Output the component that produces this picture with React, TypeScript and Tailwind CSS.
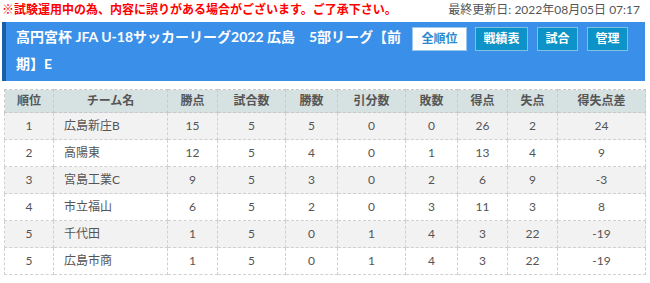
import React from "react";

const rows = [
  { rank: 1, team: "広島新庄B", pts: 15, games: 5, win: 5, draw: 0, lose: 0, gf: 26, ga: 2, diff: 24 },
  { rank: 2, team: "高陽東", pts: 12, games: 5, win: 4, draw: 0, lose: 1, gf: 13, ga: 4, diff: 9 },
  { rank: 3, team: "宮島工業C", pts: 9, games: 5, win: 3, draw: 0, lose: 2, gf: 6, ga: 9, diff: -3 },
  { rank: 4, team: "市立福山", pts: 6, games: 5, win: 2, draw: 0, lose: 3, gf: 11, ga: 3, diff: 8 },
  { rank: 5, team: "千代田", pts: 1, games: 5, win: 0, draw: 1, lose: 4, gf: 3, ga: 22, diff: -19 },
  { rank: 5, team: "広島市商", pts: 1, games: 5, win: 0, draw: 1, lose: 4, gf: 3, ga: 22, diff: -19 },
];

const headers = ["順位", "チーム名", "勝点", "試合数", "勝数", "引分数", "敗数", "得点", "失点", "得失点差"];
const widths = [49, 114, 50, 68, 52, 68, 52, 50, 50, 88];

export default function App() {
  return (
    <div
      className="w-[650px] h-[283px] bg-white overflow-hidden"
      style={{ fontFamily: 'Lato, "Noto Sans CJK JP", sans-serif' }}
    >
      <div className="flex items-center justify-between h-[20px] pl-[2px] pr-[10px] text-[12px]">
        <span className="font-bold text-[#ff0000]">※試験運用中の為、内容に誤りがある場合がございます。ご了承下さい。</span>
        <span className="text-[#555]">最終更新日: 2022年08月05日 07:17</span>
      </div>

      <div className="mt-[2px] ml-[2px] mr-[5px] flex bg-[#3a8fe8] border-l-[4px] border-[#1b5ea6] pl-[10px] pt-[1px] pb-[4px] h-[59px]">
        <div className="w-[394px] text-white font-bold text-[14px] leading-[27px]">
          高円宮杯 JFA U-18サッカーリーグ2022 広島　5部リーグ【前期】E
        </div>
        <div className="ml-auto mr-[17px] flex gap-[8px] pt-[4px] items-start text-[12px] font-bold">
          <button className="h-[24px] w-[55px] bg-white border border-[#9cc8ee] text-[#2a8bd0]">全順位</button>
          <button className="h-[24px] w-[53px] bg-[#0d93c7] border border-[#7fc1e6] text-white">戦績表</button>
          <button className="h-[24px] w-[41px] bg-[#0d93c7] border border-[#7fc1e6] text-white ml-[1px]">試合</button>
          <button className="h-[24px] w-[41px] bg-[#0d93c7] border border-[#7fc1e6] text-white ml-[1px]">管理</button>
        </div>
      </div>

      <div className="mt-[8px] ml-[4px]">
        <table className="border-collapse text-[12px] text-[#555] border border-dashed border-[#d0d0d0]">
          <colgroup>
            {widths.map((w, i) => (
              <col key={i} style={{ width: w }} />
            ))}
          </colgroup>
          <thead>
            <tr className="h-[23px] bg-[#d6e1e2]">
              {headers.map((h) => (
                <th key={h} className="font-bold text-[#555] border border-dashed border-[#c8c8c8] p-0 text-center">
                  {h}
                </th>
              ))}
            </tr>
          </thead>
          <tbody>
            {rows.map((r, i) => (
              <tr key={i} className={`h-[27px] ${i % 2 === 0 ? "bg-[#f2f2f2]" : "bg-white"}`}>
                <td className="text-center border border-dashed border-[#d0d0d0] p-0">{r.rank}</td>
                <td className="text-left pl-[10px] border border-dashed border-[#d0d0d0] p-0">{r.team}</td>
                <td className="text-center border border-dashed border-[#d0d0d0] p-0">{r.pts}</td>
                <td className="text-center border border-dashed border-[#d0d0d0] p-0">{r.games}</td>
                <td className="text-center border border-dashed border-[#d0d0d0] p-0">{r.win}</td>
                <td className="text-center border border-dashed border-[#d0d0d0] p-0">{r.draw}</td>
                <td className="text-center border border-dashed border-[#d0d0d0] p-0">{r.lose}</td>
                <td className="text-center border border-dashed border-[#d0d0d0] p-0">{r.gf}</td>
                <td className="text-center border border-dashed border-[#d0d0d0] p-0">{r.ga}</td>
                <td className="text-center border border-dashed border-[#d0d0d0] p-0">{r.diff}</td>
              </tr>
            ))}
          </tbody>
        </table>
      </div>
    </div>
  );
}
